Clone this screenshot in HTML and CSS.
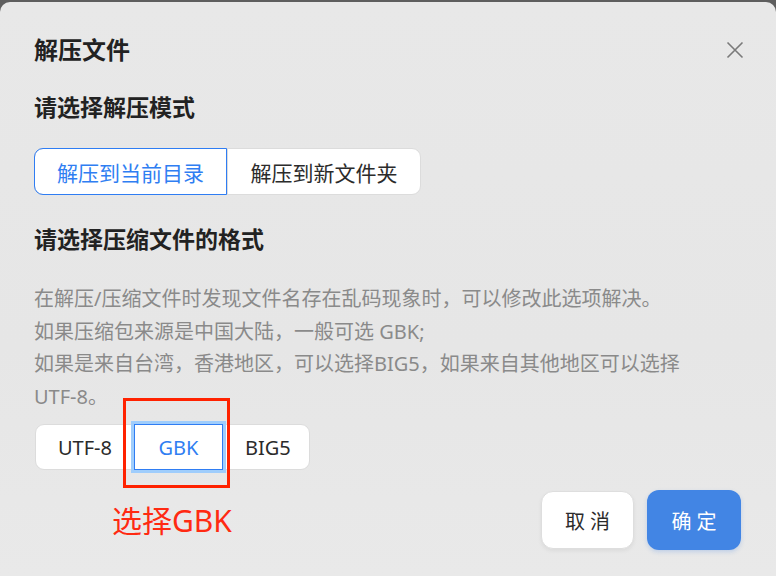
FILE: index.html
```html
<!DOCTYPE html>
<html lang="zh">
<head>
    <meta charset="UTF-8">
    <meta name="viewport" content="width=device-width, initial-scale=1.0">
    <title>解压文件</title>
    <link rel="stylesheet" href="styles.css">
</head>
<body>
    <div class="dialog">
        <div class="dialog-header">
            <h1 class="dialog-title">解压文件</h1>
            <button class="close-button" aria-label="关闭">
                <svg width="18" height="18" viewBox="0 0 18 18">
                    <path d="M1.5 1.5 L16.5 16.5 M16.5 1.5 L1.5 16.5" stroke="#7a7a7a" stroke-width="1.6" fill="none"/>
                </svg>
            </button>
        </div>

        <h2 class="section-title mode-title">请选择解压模式</h2>
        <div class="segment mode-segment">
            <button class="segment-item active">解压到当前目录</button>
            <button class="segment-item">解压到新文件夹</button>
        </div>

        <h2 class="section-title format-title">请选择压缩文件的格式</h2>
        <p class="hint">
            在解压/压缩文件时发现文件名存在乱码现象时，可以修改此选项解决。<br>
            如果压缩包来源是中国大陆，一般可选 GBK;<br>
            如果是来自台湾，香港地区，可以选择BIG5，如果来自其他地区可以选择<br>
            UTF-8。
        </p>

        <div class="format-row">
            <div class="segment format-segment">
                <button class="segment-item">UTF-8</button>
                <button class="segment-item selected">GBK</button>
                <button class="segment-item">BIG5</button>
            </div>
            <div class="mark-box"></div>
            <div class="mark-label">选择GBK</div>
        </div>

        <div class="dialog-footer">
            <button class="btn btn-cancel">取 消</button>
            <button class="btn btn-ok">确 定</button>
        </div>
    </div>
</body>
</html>
```

FILE: styles.css
```css
html, body {
    margin: 0;
    height: 100%;
}

body {
    background: #5e5e5e;
    font-family: "Noto Sans", "Noto Sans CJK SC", sans-serif;
    overflow: hidden;
}

.dialog {
    margin-top: 2px;
    height: 574px;
    box-sizing: border-box;
    padding: 32px 34px 0 34px;
    background: linear-gradient(180deg, #e8e8e8 0%, #e6e6e6 60%, #e9e9e9 100%);
    border-radius: 10px 10px 0 0;
}

.dialog-header {
    display: flex;
    justify-content: space-between;
    align-items: center;
}

.dialog-title {
    margin: 0;
    font-size: 24px;
    line-height: 32px;
    font-weight: bold;
    color: #222;
}

.close-button {
    border: none;
    background: none;
    padding: 0;
    margin-right: -2px;
    width: 18px;
    height: 18px;
    display: flex;
    cursor: pointer;
}

.section-title {
    margin: 0;
    font-size: 23px;
    line-height: 32px;
    font-weight: bold;
    color: #222;
}

.mode-title {
    margin-top: 25px;
}

.format-title {
    margin-top: 28px;
}

.segment {
    display: inline-flex;
    background: #fff;
    border: 1px solid #dcdcdc;
    border-radius: 9px;
}

.mode-segment {
    margin-top: 25px;
    height: 47px;
    box-sizing: border-box;
}

.segment-item {
    border: none;
    background: none;
    font-family: inherit;
    font-size: 20px;
    color: #2b2b2b;
    padding: 0;
    cursor: pointer;
}

.mode-segment .segment-item {
    width: 193px;
    margin: -1px 0;
    font-size: 21px;
    border-left: 1px solid #dcdcdc;
}

.mode-segment .segment-item:first-child {
    margin-left: -1px;
    border: 1px solid #2f7df3;
    border-radius: 9px 0 0 9px;
    color: #2f7ef2;
}

.hint {
    margin: 28px 0 0 0;
    font-size: 20px;
    line-height: 32.5px;
    color: #8a8a8a;
}

.format-row {
    position: relative;
    margin-top: 11px;
}

.format-segment {
    height: 46px;
    box-sizing: border-box;
    margin-left: 1px;
}

.format-segment .segment-item {
    padding: 0 22px;
    position: relative;
}

.format-segment .segment-item:first-child {
    width: 98px;
}

.format-segment .segment-item.selected {
    width: 89px;
    margin: -1px 0;
    color: #2f7ef2;
    border: 1.5px solid #2f7df3;
    outline: 3px solid #9fcdfc;
    outline-offset: 0;
}

.format-segment .segment-item:last-child {
    width: 86px;
}

.mark-box {
    position: absolute;
    left: 89px;
    top: -26px;
    width: 101px;
    height: 84px;
    border: 3px solid #ff2200;
}

.mark-label {
    position: absolute;
    left: 78px;
    top: 77px;
    font-size: 30px;
    line-height: 40px;
    color: #ff2a12;
}

.dialog-footer {
    display: flex;
    justify-content: flex-end;
    gap: 13px;
    margin-top: 20px;
    margin-right: 1px;
}

.btn {
    border: none;
    font-family: inherit;
    font-size: 20px;
    border-radius: 12px;
    cursor: pointer;
}

.btn-cancel {
    width: 93px;
    height: 58px;
    margin-top: 1px;
    background: #fff;
    color: #2b2b2b;
    border: 1px solid #dedede;
    box-shadow: 0 2px 4px rgba(0, 0, 0, 0.06);
}

.btn-ok {
    width: 94px;
    height: 60px;
    background: #4285e4;
    color: #fff;
    box-shadow: 0 2px 4px rgba(66, 133, 228, 0.25);
}
```
